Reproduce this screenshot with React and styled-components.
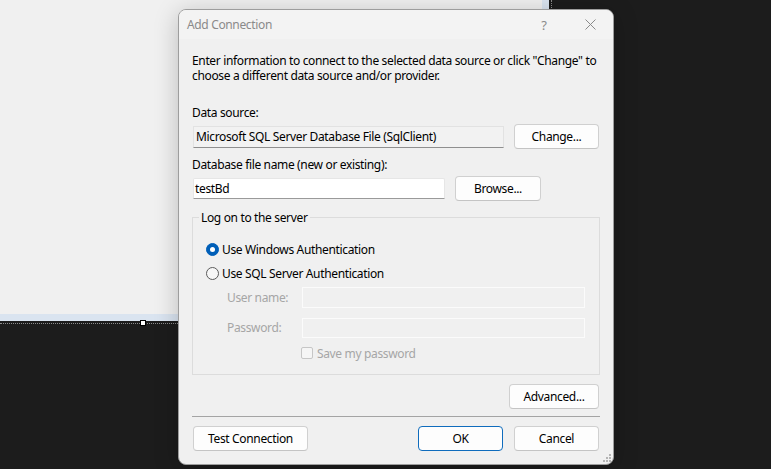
import React from "react";
import styled, { createGlobalStyle } from "styled-components";

const Global = createGlobalStyle`
  html, body { margin: 0; padding: 0; background: #1c1c1c; }
  body { width: 771px; height: 469px; overflow: hidden; font-family: "Noto Sans", "Segoe UI", sans-serif; }
  * { box-sizing: border-box; }
`;

const Screen = styled.div`
  position: relative;
  width: 771px;
  height: 469px;
  background: #1c1c1c;
  overflow: hidden;
`;

const SurfaceFrame = styled.div`
  position: relative;
  width: 552px;
  height: 324px;
  padding: 0 1px 1px 0;
  border-right: 1px dotted #8a8a8a;
  border-bottom: 1px dotted #8a8a8a;
`;

const Surface = styled.div`
  width: 549px;
  height: 321px;
  background: #f0f0f0;
  border-right: 7px solid #dae4f0;
  border-bottom: 7px solid #dae4f0;
`;

const Handle = styled.div`
  position: absolute;
  left: 140px;
  top: 320px;
  width: 6px;
  height: 6px;
  background: #fff;
  border: 1px solid #000;
`;

const Dialog = styled.div`
  position: absolute;
  left: 178px;
  top: 9px;
  width: 436px;
  height: 456px;
  background: #f0f0f0;
  border: 1px solid #9d9d9d;
  border-radius: 8px;
  box-shadow: 0 4px 24px rgba(0, 0, 0, 0.22);
  display: flex;
  flex-direction: column;
  font-size: 12px;
  letter-spacing: -0.35px;
  color: #000;
  overflow: hidden;
`;

const TitleBar = styled.div`
  height: 29px;
  flex: none;
  display: flex;
  align-items: center;
  background: #f3f3f3;
  padding-left: 8px;
`;

const Title = styled.div`
  flex: 1;
  color: #8a8a8a;
  font-size: 12px;
  line-height: 15px;
`;

const TitleButton = styled.div`
  width: 46px;
  height: 29px;
  display: flex;
  align-items: center;
  justify-content: center;
  color: #8a8a8a;
  font-size: 13px;
`;

const Body = styled.div`
  flex: 1;
  display: flex;
  flex-direction: column;
  padding: 0 13px;
  position: relative;
`;

const Text = styled.div`
  margin-top: ${(p) => p.$mt || 0}px;
  line-height: 15px;
  white-space: nowrap;
  color: #000;
`;

const Row = styled.div`
  display: flex;
  align-items: center;
  gap: 10px;
  margin-top: ${(p) => p.$mt || 0}px;
  height: 25px;
`;

const ReadOnlyField = styled.div`
  flex: 1;
  margin-left: 1px;
  height: 22px;
  background: #f2f2f2;
  border: 1px solid #e2e2e2;
  border-bottom: 1px solid #8f8f8f;
  display: flex;
  align-items: center;
  padding-left: 2px;
  white-space: nowrap;
`;

const Input = styled.div`
  width: ${(p) => p.$w}px;
  margin-left: 1px;
  height: 21px;
  background: #fff;
  border: 1px solid #e6e6e6;
  border-bottom: 1px solid #9a9a9a;
  display: flex;
  align-items: center;
  padding-left: 1px;
  border-radius: 2px 2px 0 0;
`;

const Button = styled.div`
  width: ${(p) => p.$w}px;
  height: 25px;
  flex: none;
  margin-right: ${(p) => p.$mr || 0}px;
  margin-left: ${(p) => p.$ml || 0}px;
  display: flex;
  align-items: center;
  justify-content: center;
  background: #fdfdfd;
  border: 1px solid ${(p) => (p.$primary ? "#0f6cbd" : "#d0d0d0")};
  border-bottom-color: ${(p) => (p.$primary ? "#0f6cbd" : "#c4c4c4")};
  border-radius: 4px;
  white-space: nowrap;
`;

const Group = styled.fieldset`
  margin: 9px 0 0 0;
  padding: 15px 14px 14px 13px;
  border: 1px solid #dcdcdc;
  display: flex;
  flex-direction: column;
  min-width: 0;
`;

const Legend = styled.legend`
  margin-left: -7px;
  padding: 0 2px;
  line-height: 15px;
  font-size: 12px;
`;

const OptionRow = styled.div`
  display: flex;
  align-items: center;
  height: 18px;
  margin-top: ${(p) => p.$mt || 0}px;
  gap: 3px;
  white-space: nowrap;
`;

const Radio = styled.div`
  width: 13px;
  height: 13px;
  border-radius: 50%;
  flex: none;
  background: ${(p) => (p.$checked ? "#005fb8" : "#f7f7f7")};
  border: 1px solid ${(p) => (p.$checked ? "#005fb8" : "#5b5b5b")};
  display: flex;
  align-items: center;
  justify-content: center;
  &::after {
    content: "";
    display: ${(p) => (p.$checked ? "block" : "none")};
    width: 5px;
    height: 5px;
    border-radius: 50%;
    background: #fff;
  }
`;

const CredRow = styled.div`
  display: flex;
  align-items: center;
  height: 21px;
  margin-top: ${(p) => p.$mt}px;
  padding-left: 21px;
`;

const CredLabel = styled.div`
  width: 75px;
  flex: none;
  color: #a6a6a6;
  white-space: nowrap;
`;

const DisabledInput = styled.div`
  flex: 1;
  height: ${(p) => p.$h}px;
  border: 1px solid #fbfbfb;
  background: #f0f0f0;
`;

const CheckRow = styled.div`
  display: flex;
  align-items: center;
  height: 14px;
  margin-top: 8px;
  padding-left: 95px;
  gap: 4px;
  color: #a6a6a6;
  white-space: nowrap;
`;

const Check = styled.div`
  width: 12px;
  height: 12px;
  border: 1px solid #c6c6c6;
  border-radius: 2px;
  background: #f5f5f5;
`;

const RightRow = styled.div`
  display: flex;
  justify-content: flex-end;
  margin-top: 9px;
`;

const Separator = styled.div`
  height: 1px;
  background: #a4a4a4;
  margin-top: 7px;
`;

const FooterRow = styled.div`
  display: flex;
  align-items: center;
  margin-top: 9px;
  padding-left: 1px;
`;

const Spacer = styled.div`
  flex: 1;
`;

const Grip = styled.svg`
  position: absolute;
  right: 2px;
  bottom: 2px;
`;

export default function App() {
  return (
    <Screen>
      <Global />
      <SurfaceFrame>
        <Surface />
        <Handle />
      </SurfaceFrame>
      <Dialog>
        <TitleBar>
          <Title>Add Connection</Title>
          <TitleButton>?</TitleButton>
          <TitleButton>
            <svg width="11" height="11" viewBox="0 0 11 11">
              <path d="M0.5 0.5 L10.5 10.5 M10.5 0.5 L0.5 10.5" stroke="#8a8a8a" strokeWidth="1" fill="none" />
            </svg>
          </TitleButton>
        </TitleBar>
        <Body>
          <Text $mt={14}>
            Enter information to connect to the selected data source or click "Change" to
            <br />
            choose a different data source and/or provider.
          </Text>
          <Text $mt={22}>Data source:</Text>
          <Row $mt={4}>
            <ReadOnlyField>Microsoft SQL Server Database File (SqlClient)</ReadOnlyField>
            <Button $w={85} $mr={1}>Change...</Button>
          </Row>
          <Text $mt={8}>Database file name (new or existing):</Text>
          <Row $mt={4}>
            <Input $w={252}>testBd</Input>
            <Button $w={86}>Browse...</Button>
          </Row>
          <Group>
            <Legend>Log on to the server</Legend>
            <OptionRow>
              <Radio $checked />
              Use Windows Authentication
            </OptionRow>
            <OptionRow $mt={6}>
              <Radio />
              Use SQL Server Authentication
            </OptionRow>
            <CredRow $mt={5}>
              <CredLabel>User name:</CredLabel>
              <DisabledInput $h={21} />
            </CredRow>
            <CredRow $mt={9}>
              <CredLabel>Password:</CredLabel>
              <DisabledInput $h={20} />
            </CredRow>
            <CheckRow>
              <Check />
              Save my password
            </CheckRow>
          </Group>
          <RightRow>
            <Button $w={90} $mr={1}>Advanced...</Button>
          </RightRow>
          <Separator />
          <FooterRow>
            <Button $w={115}>Test Connection</Button>
            <Spacer />
            <Button $w={85} $primary>OK</Button>
            <Button $w={85} $mr={1} $ml={11}>Cancel</Button>
          </FooterRow>
          <Grip width="9" height="9" viewBox="0 0 9 9">
            <g fill="#b4b4b4">
              <rect x="7" y="1" width="2" height="2" />
              <rect x="4" y="4" width="2" height="2" />
              <rect x="7" y="4" width="2" height="2" />
              <rect x="1" y="7" width="2" height="2" />
              <rect x="4" y="7" width="2" height="2" />
              <rect x="7" y="7" width="2" height="2" />
            </g>
          </Grip>
        </Body>
      </Dialog>
    </Screen>
  );
}
